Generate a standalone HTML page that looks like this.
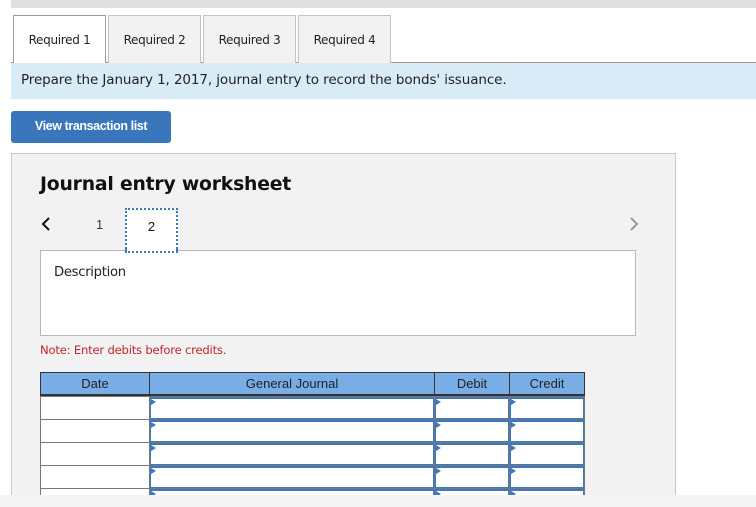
<!DOCTYPE html>
<html><head><style>
*{margin:0;padding:0;box-sizing:border-box}
html,body{width:756px;height:507px;overflow:hidden}
body{background:#fff;font-family:Verdana,"DejaVu Sans",sans-serif;position:relative}
.abs{position:absolute}
.tab{position:absolute;top:15px;height:48px;border:1px solid #c4c4c4;border-bottom:none;background:#f2f2f2;font-size:12px;color:#222;text-align:center;line-height:48px;font-family:"DejaVu Sans",sans-serif;letter-spacing:-0.3px}
.tab.a{background:#fff;border-color:#9a9a9a;height:49px}
.th{position:absolute;top:372px;height:24px;background:#78ade6;border:1px solid #333;border-bottom:2px solid #333;font-family:"Liberation Sans",Arial,sans-serif;font-size:13px;color:#222;text-align:center;line-height:21px}
.cell{position:absolute;height:23px;background:#fff}
.in{position:absolute;height:22px;border:1px solid #3c78be;border-top:2px solid #3c78be;background:#fff}
.in:before{content:"";position:absolute;left:0;top:0;border-left:5px solid #3c78be;border-top:3px solid transparent;border-bottom:3px solid transparent}
</style></head><body>
<div class="abs" style="left:11px;top:0;width:745px;height:8px;background:#e0e0e0"></div>
<div class="abs" style="left:11px;top:62px;width:745px;height:1px;background:#9a9a9a"></div>
<div class="tab a" style="left:13px;width:93px">Required 1</div>
<div class="tab" style="left:108px;width:93px">Required 2</div>
<div class="tab" style="left:203px;width:93px">Required 3</div>
<div class="tab" style="left:298px;width:93px">Required 4</div>
<div class="abs" style="left:11px;top:63px;width:745px;height:36px;background:#daebf8;font-size:13.5px;line-height:35px;padding-left:10px;color:#222;font-family:'DejaVu Sans',sans-serif;letter-spacing:-0.1px;white-space:nowrap">Prepare the January 1, 2017, journal entry to record the bonds' issuance.</div>
<div class="abs" style="left:11px;top:111px;width:160px;height:32px;background:#3a76bb;border-radius:3px;color:#fff;font-family:'Liberation Sans',Arial,sans-serif;font-weight:bold;font-size:12.5px;text-align:center;line-height:31px;letter-spacing:-0.4px">View transaction list</div>
<div class="abs" style="left:11px;top:153px;width:665px;height:360px;background:#f2f2f2;border:1px solid #c8c8c8"></div>
<div class="abs" style="left:40px;top:174px;font-size:18.8px;font-weight:bold;color:#111;font-family:'DejaVu Sans',sans-serif;letter-spacing:-0.2px;white-space:nowrap">Journal entry worksheet</div>
<svg class="abs" style="left:40px;top:216px" width="12" height="16"><path d="M9 2L3 8l6 6" stroke="#111" stroke-width="2" fill="none"/></svg>
<div class="abs" style="left:96px;top:217px;font-size:13px;font-family:'Liberation Sans',sans-serif;color:#333">1</div>
<div class="abs" style="left:125px;top:208px;width:53px;height:45px;background:#fff;border:2px dotted #3c78be;font-size:13px;font-family:'Liberation Sans',sans-serif;text-align:center;line-height:34px;color:#111">2</div>
<svg class="abs" style="left:628px;top:216px" width="12" height="16"><path d="M3 2l6 6-6 6" stroke="#999" stroke-width="2" fill="none"/></svg>
<div class="abs" style="left:40px;top:250px;width:596px;height:86px;background:#fff;border:1px solid #b8b8b8;font-size:13.2px;padding:14px 0 0 13px;color:#222;font-family:'DejaVu Sans',sans-serif;letter-spacing:-0.3px">Description</div>
<div class="abs" style="left:125px;top:249px;width:53px;height:4px;border:2px dotted #3c78be;border-top:none;background:#fff"></div>
<div class="abs" style="left:40px;top:343px;font-size:11.6px;color:#c0262c;font-family:'DejaVu Sans',sans-serif;letter-spacing:-0.2px;white-space:nowrap">Note: Enter debits before credits.</div>
<div class="th" style="left:40px;width:110px">Date</div>
<div class="th" style="left:149px;width:286px">General Journal</div>
<div class="th" style="left:434px;width:76px">Debit</div>
<div class="th" style="left:509px;width:76px">Credit</div>
<div class="abs" style="left:40px;top:396px;width:110px;height:110px;background:#777"></div>
<div class="abs" style="left:149px;top:396px;width:436px;height:110px;background:#777"></div>
<div class="cell" style="left:41px;top:397px;width:108px;height:22px"></div>
<div class="cell" style="left:41px;top:420px;width:108px;height:22px"></div>
<div class="cell" style="left:41px;top:443px;width:108px;height:22px"></div>
<div class="cell" style="left:41px;top:466px;width:108px;height:22px"></div>
<div class="cell" style="left:41px;top:489px;width:108px;height:22px"></div>
<div class="in" style="left:150px;top:397px;width:284px"></div>
<div class="in" style="left:435px;top:397px;width:74px"></div>
<div class="in" style="left:510px;top:397px;width:74px"></div>
<div class="in" style="left:150px;top:420px;width:284px"></div>
<div class="in" style="left:435px;top:420px;width:74px"></div>
<div class="in" style="left:510px;top:420px;width:74px"></div>
<div class="in" style="left:150px;top:443px;width:284px"></div>
<div class="in" style="left:435px;top:443px;width:74px"></div>
<div class="in" style="left:510px;top:443px;width:74px"></div>
<div class="in" style="left:150px;top:466px;width:284px"></div>
<div class="in" style="left:435px;top:466px;width:74px"></div>
<div class="in" style="left:510px;top:466px;width:74px"></div>
<div class="in" style="left:150px;top:489px;width:284px"></div>
<div class="in" style="left:435px;top:489px;width:74px"></div>
<div class="in" style="left:510px;top:489px;width:74px"></div>
<div class="abs" style="left:0;top:495px;width:756px;height:30px;background:#f5f5f5;z-index:10"></div>
</body></html>
